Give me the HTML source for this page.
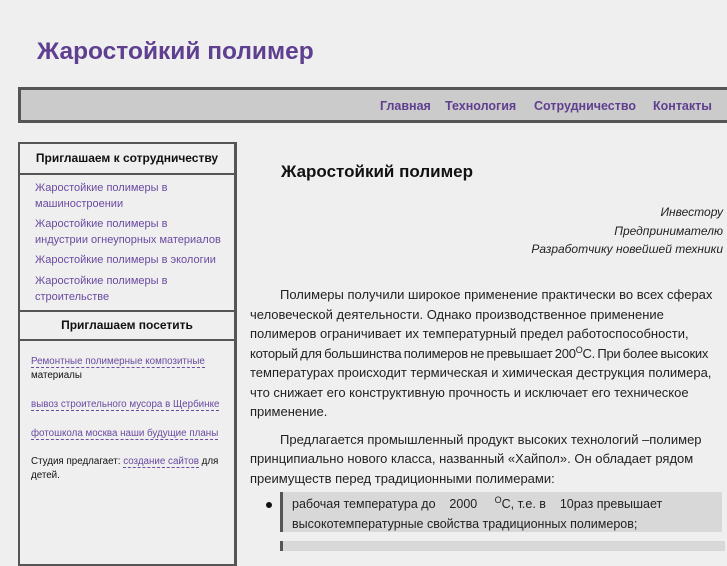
<!DOCTYPE html>
<html><head><meta charset="utf-8"><style>
body{margin:0;background:#efefef;font-family:"Liberation Sans","DejaVu Sans",sans-serif;width:727px;height:545px;overflow:hidden;position:relative}
.a{position:absolute}
h1{position:absolute;left:37px;top:38px;margin:0;font-size:24.5px;color:#5f3f8f;font-weight:bold}
.nav{left:18px;top:87px;width:720px;height:30px;background:#cbcbcb;border:3px solid #555;}
.nav span{position:absolute;top:9px;font-size:12.5px;font-weight:bold;color:#5f3f8f}
.side{left:18px;top:142px;width:214px;height:420px;border:2px solid #555;border-right-width:3px;background:#efefef}
.sh{position:absolute;left:0;width:214px;text-align:center;font-size:12px;font-weight:bold;color:#111;border-bottom:2px solid #555}
.sl{position:absolute;left:15px;font-size:11px;line-height:16px;color:#6a4aa0;white-space:nowrap}
.sm{position:absolute;left:11px;font-size:9.8px;line-height:14px;color:#111}
.sm a{color:#6a4aa0;text-decoration:none;border-bottom:1px dashed #6a4aa0}
.main{left:250px;top:0;width:477px;font-size:13px;color:#222}
p{margin:0;white-space:nowrap}
sup{font-size:9px;line-height:0;vertical-align:5px}
</style></head><body>
<h1>Жаростойкий полимер</h1>
<div class="a nav">
<span style="left:359px">Главная</span>
<span style="left:424px">Технология</span>
<span style="left:513px">Сотрудничество</span>
<span style="left:632px">Контакты</span>
</div>
<div class="a side">
<div class="sh" style="top:0;height:29px;line-height:29px">Приглашаем к сотрудничеству</div>
<div class="sl" style="top:36px">Жаростойкие полимеры в<br>машиностроении</div>
<div class="sl" style="top:72px">Жаростойкие полимеры в<br>индустрии огнеупорных материалов</div>
<div class="sl" style="top:108px">Жаростойкие полимеры в экологии</div>
<div class="sl" style="top:129px">Жаростойкие полимеры в<br>строительстве</div>
<div class="sh" style="top:166px;border-top:2px solid #555;height:27px;line-height:27px">Приглашаем посетить</div>
<div class="sm" style="top:211px"><a>Ремонтные полимерные композитные</a><br>материалы</div>
<div class="sm" style="top:254px"><a>вывоз строительного мусора в Щербинке</a></div>
<div class="sm" style="top:283px"><a>фотошкола москва наши будущие планы</a></div>
<div class="sm" style="top:311px;width:200px">Студия предлагает: <a>создание сайтов</a> для детей.</div>
</div>
<div class="a main">
<div class="a" style="left:31px;top:162px;font-size:17px;font-weight:bold;color:#111">Жаростойкий полимер</div>
<div class="a" style="right:4px;top:203px;text-align:right;font-style:italic;font-size:12px;line-height:18.5px;width:400px">Инвестору<br>Предпринимателю<br>Разработчику новейшей техники</div>
<div class="a" style="left:0;top:285px;width:486px;line-height:19.5px;font-size:13px">
<p style="text-indent:30px">Полимеры получили широкое применение практически во всех сферах</p>
<p>человеческой деятельности. Однако производственное применение<br>полимеров ограничивает их температурный предел работоспособности,<br><span style="letter-spacing:-0.25px;word-spacing:-1px">который для большинства полимеров не превышает 200<sup>О</sup>С. При более высоких</span><br>температурах происходит термическая и химическая деструкция полимера,<br>что снижает его конструктивную прочность и исключает его техническое<br>применение.</p>
<p style="text-indent:30px;margin-top:8px">Предлагается промышленный продукт высоких технологий –полимер</p>
<p>принципиально нового класса, названный «Хайпол». Он обладает рядом<br>преимуществ перед традиционными полимерами:</p>
</div>
<div class="a" style="left:16px;top:502px;width:6px;height:6px;border-radius:50%;background:#111"></div>
<div class="a" style="left:30px;top:492px;width:442px;height:40px;background:#d8d8d8;border-left:3px solid #555;padding-left:9px;line-height:20px;box-sizing:border-box;padding-top:2px;font-size:12.5px">рабочая температура до&nbsp;&nbsp;&nbsp; 2000&nbsp;&nbsp;&nbsp;&nbsp; <sup>О</sup>С, т.е. в&nbsp;&nbsp;&nbsp; 10раз превышает высокотемпературные свойства традиционных полимеров;</div>
<div class="a" style="left:30px;top:541px;width:442px;height:10px;background:#d8d8d8;border-left:3px solid #555"></div>
</div>
</body></html>
